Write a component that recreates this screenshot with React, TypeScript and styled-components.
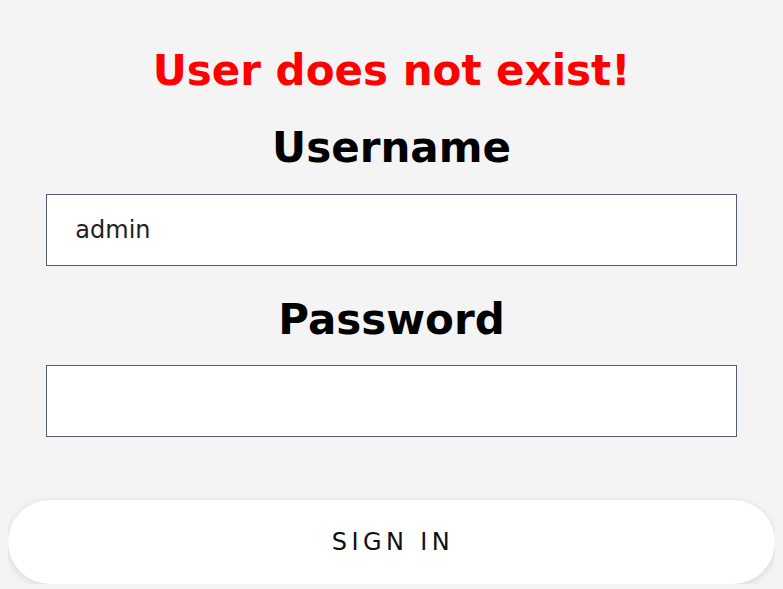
import React from "react";
import styled, { createGlobalStyle } from "styled-components";

const GlobalStyle = createGlobalStyle`
  html, body {
    background: #f4f4f4;
  }
  body {
    margin: 8px;
    font-family: "DejaVu Sans", "Liberation Sans", sans-serif;
  }
`;

const Form = styled.form`
  display: flex;
  flex-direction: column;
  align-items: center;
  padding-top: 39px;
`;

const ErrorMessage = styled.h1`
  margin: 0 0 29px;
  font-size: 42px;
  line-height: 48px;
  font-weight: bold;
  color: #ff0000;
`;

const Label = styled.label<{ $gapBelow: number }>`
  display: block;
  margin: 0 0 ${(p) => p.$gapBelow}px;
  font-size: 42px;
  line-height: 48px;
  font-weight: bold;
  color: #000;
`;

const Input = styled.input<{ $gapBelow: number }>`
  box-sizing: border-box;
  width: 90%;
  height: 72px;
  margin: 0 0 ${(p) => p.$gapBelow}px;
  padding: 0 28px;
  border: 1px solid #525d73;
  border-radius: 0;
  background: #fff;
  font-family: "DejaVu Sans", sans-serif;
  font-size: 24px;
  color: #222;
  outline: none;
`;

const SignInButton = styled.button`
  box-sizing: border-box;
  width: 100%;
  height: 84px;
  border: none;
  border-radius: 42px;
  background: #fff;
  box-shadow: 0 2px 8px rgba(0, 0, 0, 0.12);
  font-family: "DejaVu Sans", sans-serif;
  font-size: 24px;
  letter-spacing: 4.4px;
  text-indent: 3px;
  color: #111;
  cursor: pointer;
`;

export default function App() {
  return (
    <>
      <GlobalStyle />
      <Form onSubmit={(e) => e.preventDefault()}>
        <ErrorMessage>User does not exist!</ErrorMessage>
        <Label htmlFor="username" $gapBelow={22}>Username</Label>
        <Input id="username" type="text" defaultValue="admin" $gapBelow={30} />
        <Label htmlFor="password" $gapBelow={21}>Password</Label>
        <Input id="password" type="password" $gapBelow={63} />
        <SignInButton type="submit">SIGN IN</SignInButton>
      </Form>
    </>
  );
}
